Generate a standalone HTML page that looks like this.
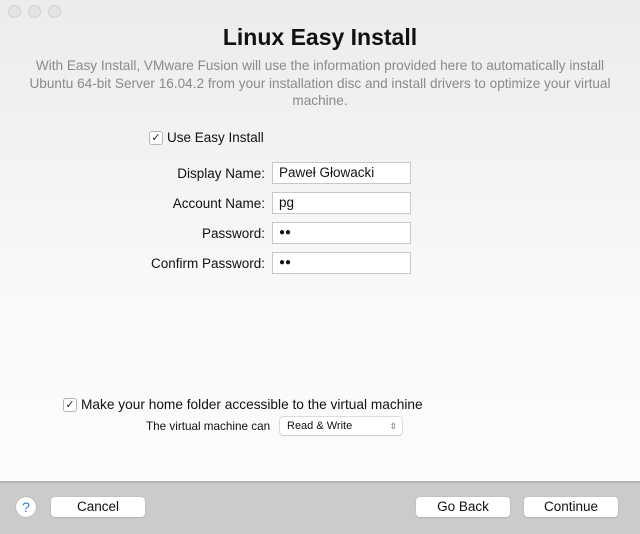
<!DOCTYPE html>
<html><head><style>
body{margin:0;width:640px;height:532px;overflow:hidden;font-family:"Liberation Sans",sans-serif;position:relative;background:linear-gradient(180deg,#ececec 0%,#f3f3f3 30%,#fafafa 60%,#fcfcfc 100%);}
.a{position:absolute}
.tl{position:absolute;top:5px;width:11px;height:11px;border-radius:50%;border:1px solid #cfcfcf;background:#e4e4e4}
h1{position:absolute;top:24px;left:0;width:640px;text-align:center;margin:0;font-size:23px;font-weight:bold;color:#111}
.desc{position:absolute;top:57px;left:0;width:640px;text-align:center;font-size:13.6px;line-height:17.5px;color:#8a8a8a;white-space:nowrap}
.cb{position:absolute;width:12px;height:12px;border:1px solid #b5b5b5;border-radius:3px;background:#fff;font-size:11px;line-height:12px;text-align:center;color:#222}
.lbl{position:absolute;right:375px;font-size:13.5px;color:#111}
.f{position:absolute;left:272px;height:20px;border:1px solid #c8c8c8;background:#fff;font-size:13.5px;line-height:20px;padding-left:6px;width:131px;color:#111}
.foot{position:absolute;top:481px;left:0;width:640px;height:51px;background:#cbcbcb;border-top:2px solid #b5b5b5}
.btn{position:absolute;top:497px;height:20px;background:#fff;border-radius:4px;box-shadow:0 0 0 0.5px #b8b8b8,0 1px 1px rgba(0,0,0,.15);text-align:center;font-size:13.5px;line-height:20px;color:#111}
</style></head><body>
<div class="tl" style="left:8px"></div><div class="tl" style="left:28px"></div><div class="tl" style="left:48px"></div>
<h1>Linux Easy Install</h1>
<div class="desc">With Easy Install, VMware Fusion will use the information provided here to automatically install<br>Ubuntu 64-bit Server 16.04.2 from your installation disc and install drivers to optimize your virtual<br>machine.</div>
<div class="cb" style="left:149px;top:131px">✓</div>
<div class="a" style="left:167px;top:130px;font-size:13.5px;color:#111">Use Easy Install</div>
<div class="lbl" style="top:166px">Display Name:</div><div class="f" style="top:162px">Paweł Głowacki</div>
<div class="lbl" style="top:196px">Account Name:</div><div class="f" style="top:192px">pg</div>
<div class="lbl" style="top:226px">Password:</div><div class="f" style="top:222px;font-size:10px">●●</div>
<div class="lbl" style="top:256px">Confirm Password:</div><div class="f" style="top:252px;font-size:10px">●●</div>
<div class="cb" style="left:63px;top:398px">✓</div>
<div class="a" style="left:81px;top:397px;font-size:13.7px;color:#111">Make your home folder accessible to the virtual machine</div>
<div class="a" style="left:146px;top:420px;font-size:11.7px;color:#111">The virtual machine can</div>
<div class="a" style="left:280px;top:417px;width:122px;height:18px;background:#fff;border-radius:3px;box-shadow:0 0 0 0.5px #bbb,0 1px 1px rgba(0,0,0,.12);font-size:11px;line-height:18px;color:#111"><span style="margin-left:7px">Read &amp; Write</span><span style="position:absolute;right:5px;top:0;font-size:9px;color:#555">⇳</span></div>
<div class="foot"></div>
<div class="a" style="left:16px;top:497px;width:20px;height:20px;border-radius:50%;background:#fff;box-shadow:0 0 0 0.5px #aaa;color:#2a7de1;font-size:14px;line-height:20px;text-align:center">?</div>
<div class="btn" style="left:51px;width:94px">Cancel</div>
<div class="btn" style="left:416px;width:94px">Go Back</div>
<div class="btn" style="left:524px;width:94px">Continue</div>
</body></html>
